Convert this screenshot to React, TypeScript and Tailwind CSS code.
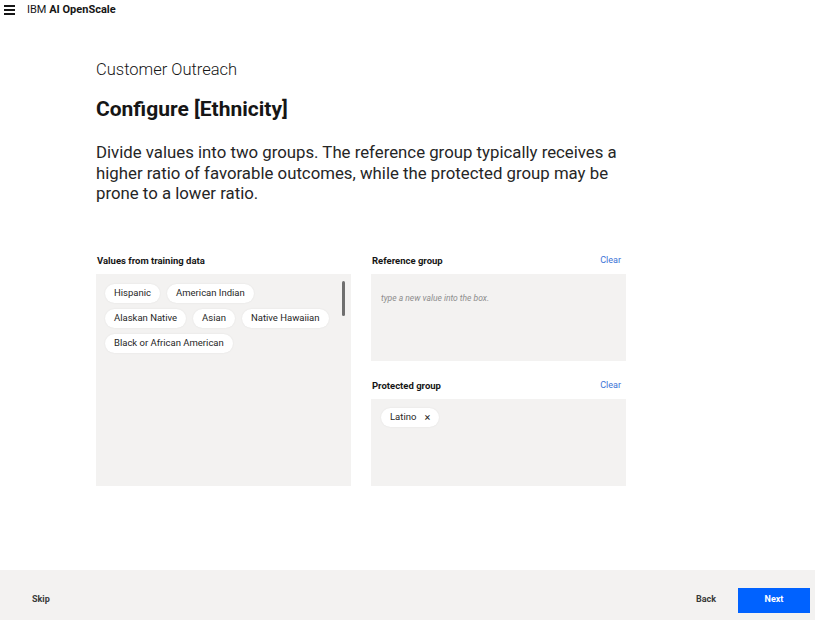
const values = [
  "Hispanic",
  "American Indian",
  "Alaskan Native",
  "Asian",
  "Native Hawaiian",
  "Black or African American",
];

const Chip = ({ label, removable }: { label: string; removable?: boolean }) => (
  <span className="h-[19px] px-[9px] rounded-full bg-white flex items-center gap-[8px] text-[9.5px] text-[#262626] shadow-[0_0_2px_rgba(0,0,0,0.08)]">
    {label}
    {removable && <span className="text-[11px] leading-none">×</span>}
  </span>
);

const GroupLabel = ({ title, clear }: { title: string; clear?: boolean }) => (
  <div className="h-[25px] flex items-center justify-between pl-[1px] pr-[5px]">
    <span className="text-[9.5px] font-bold text-[#161616]">{title}</span>
    {clear && <span className="text-[9px] text-[#3b73d6]">Clear</span>}
  </div>
);

const App = () => {
  return (
    <div
      className="w-[815px] h-[620px] bg-white flex flex-col text-[#161616]"
      style={{ fontFamily: 'Roboto, "Noto Sans", sans-serif' }}
    >
      <header className="h-[20px] flex items-center gap-[12px] pl-[4px]">
        <svg width="11" height="10" viewBox="0 0 11 10">
          <rect x="0" y="0" width="11" height="2" fill="#161616" />
          <rect x="0" y="4" width="11" height="2" fill="#161616" />
          <rect x="0" y="8" width="11" height="2" fill="#161616" />
        </svg>
        <span className="text-[11px]">
          IBM <span className="font-bold">AI OpenScale</span>
        </span>
      </header>

      <main className="flex-1 pl-[96px] pt-[38px]">
        <div className="text-[16.5px] font-light leading-[24px]">Customer Outreach</div>
        <h1 className="mt-[13px] text-[21px] font-bold leading-[28px]">Configure [Ethnicity]</h1>
        <p className="mt-[19px] whitespace-nowrap text-[16.8px] leading-[20.5px] text-[#262626]">
          Divide values into two groups. The reference group typically receives a
          <br />
          higher ratio of favorable outcomes, while the protected group may be
          <br />
          prone to a lower ratio.
        </p>

        <div className="mt-[45px] flex gap-[20px]">
          <div className="w-[255px] flex flex-col">
            <GroupLabel title="Values from training data" />
            <div className="relative h-[212px] bg-[#f3f2f1] pl-[9px] pr-[14px] pt-[10px] flex flex-wrap content-start gap-x-[7px] gap-y-[6px]">
              {values.map((v) => (
                <Chip key={v} label={v} />
              ))}
              <div className="absolute right-[6px] top-[7px] w-[3px] h-[35px] rounded bg-[#6f6f6f]" />
            </div>
          </div>

          <div className="w-[255px] flex flex-col">
            <GroupLabel title="Reference group" clear />
            <div className="h-[87px] bg-[#f3f2f1] px-[10px] pt-[10px]">
              <span className="text-[8.5px] italic text-[#8d8d8d]">type a new value into the box.</span>
            </div>
            <div className="mt-[13px]">
              <GroupLabel title="Protected group" clear />
            </div>
            <div className="h-[87px] bg-[#f3f2f1] px-[10px] pt-[9px] flex items-start">
              <Chip label="Latino" removable />
            </div>
          </div>
        </div>
      </main>

      <footer className="h-[50px] bg-[#f3f2f1] flex items-center pt-[10px] pl-[32px] pr-[5px]">
        <span className="text-[9px] font-bold text-[#393939]">Skip</span>
        <span className="ml-auto mr-[22px] text-[9px] font-bold text-[#393939]">Back</span>
        <button className="w-[72px] h-[25px] bg-[#0062ff] text-white text-[9px] font-bold">Next</button>
      </footer>
    </div>
  );
};

export default App;
